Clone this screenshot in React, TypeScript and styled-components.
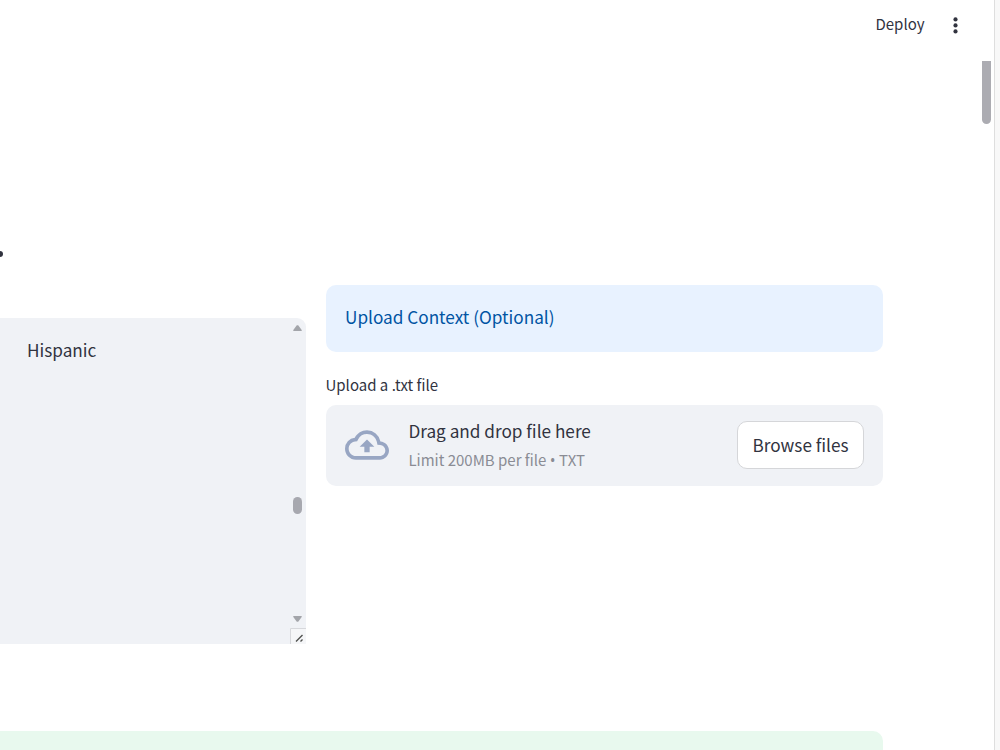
import React from "react";
import styled, { createGlobalStyle } from "styled-components";

const GlobalStyle = createGlobalStyle`
  * { box-sizing: border-box; }
  html, body { margin: 0; height: 750px; overflow: hidden; background: #ffffff; }
  body {
    font-family: "Noto Sans CJK SC", "Source Sans Pro", sans-serif;
    color: #31333f;
  }
`;

const Shell = styled.div`
  display: flex;
  width: 1000px;
  height: 750px;
  overflow: hidden;
`;

const Main = styled.div`
  display: flex;
  flex-direction: column;
  width: 994px;
`;

const WindowEdge = styled.div`
  width: 6px;
  border-left: 1px solid #dedede;
  background: #f8f8f8;
`;

const Header = styled.header`
  display: flex;
  flex: none;
  justify-content: flex-end;
  align-items: center;
  height: 61px;
  padding: 0 34px 13px 0;
  gap: 26.5px;
`;

const Text = styled.span<{ $size: number; $line: number; $color?: string }>`
  display: block;
  font-size: ${(p) => p.$size}px;
  line-height: ${(p) => p.$line}px;
  color: ${(p) => p.$color ?? "#31333f"};
  white-space: nowrap;
`;

const Bullet = styled.span`
  font-family: "Open Sans", "Noto Sans", sans-serif;
  font-size: 15.5px;
  line-height: 1;
`;

const MenuDots = styled.svg`
  display: block;
  width: 9px;
  height: 20px;
  margin-top: 1px;
  fill: #31333f;
`;

const Body = styled.div`
  display: flex;
  flex: 1;
  min-height: 0;
`;

const Content = styled.main`
  display: flex;
  flex-direction: column;
  flex: none;
  width: 883px;
`;

const Track = styled.div`
  flex: 1;
  display: flex;
  justify-content: flex-end;
  padding-right: 3px;
`;

const PageThumb = styled.div`
  width: 9px;
  height: 63px;
  background: #acacb2;
  border-radius: 0 0 5px 5px;
`;

const Title = styled.div`
  height: 224px;
  flex: none;
  display: flex;
  align-items: flex-end;
  padding-bottom: 28px;
`;

const Period = styled.span`
  width: 3px;
  height: 6px;
  border-radius: 0 3px 3px 0;
  background: #31333f;
`;

const Columns = styled.div`
  display: grid;
  flex: none;
  grid-template-columns: 306px 557px;
  column-gap: 20px;
  height: 359px;
`;

const TextArea = styled.div`
  display: flex;
  justify-content: space-between;
  height: 326px;
  margin-top: 33px;
  background: #f0f2f6;
  border-radius: 0 9px 0 0;
  padding: 18px 0 0 27px;
`;

const ScrollBar = styled.div`
  display: flex;
  flex-direction: column;
  align-items: center;
  width: 17px;
  height: 326px;
  margin-top: -18px;
  padding-top: 7px;
`;

const Arrow = styled.svg`
  display: block;
  flex: none;
  width: 9px;
  height: 6px;
  fill: #a3a5aa;
`;

const Thumb = styled.div`
  flex: none;
  width: 9px;
  height: 17px;
  margin: 166px 0 102px;
  border-radius: 5px;
  background: #a7a8af;
`;

const Grip = styled.svg`
  display: block;
  width: 16px;
  height: 16px;
  margin-top: auto;
`;

const Side = styled.section`
  display: flex;
  flex-direction: column;
`;

const Info = styled.div`
  height: 67px;
  padding: 18px 19px;
  border-radius: 10px;
  background: #e8f2ff;
`;

const Label = styled.div`
  height: 23px;
  margin: 21px 0 9px -0.5px;
`;

const Dropzone = styled.div`
  display: flex;
  align-items: center;
  height: 81px;
  padding: 0 19px 1px;
  border-radius: 10px;
  background: #f0f2f6;
`;

const CloudIcon = styled.svg`
  flex: none;
  width: 44px;
  height: 44px;
  margin-right: 19.4px;
  fill: #98a6c3;
`;

const Instructions = styled.div`
  flex: 1;
  padding-bottom: 1px;
`;

const BrowseButton = styled.button`
  display: flex;
  justify-content: center;
  align-items: center;
  width: 127px;
  height: 48px;
  padding: 0 0 1px;
  border: 1px solid #d5d6d9;
  border-radius: 10px;
  background: #ffffff;
  font-family: inherit;
`;

const Success = styled.div`
  flex: none;
  height: 40px;
  margin-top: 87px;
  border-radius: 0 10px 0 0;
  background: #e8f9ee;
`;

export default function App() {
  return (
    <>
      <GlobalStyle />
      <Shell>
        <Main>
          <Header>
            <Text $size={15} $line={24}>Deploy</Text>
            <MenuDots viewBox="0 0 9 20">
              <circle cx="4.5" cy="4.4" r="2.1" />
              <circle cx="4.5" cy="10.4" r="2.1" />
              <circle cx="4.5" cy="16.4" r="2.1" />
            </MenuDots>
          </Header>
          <Body>
            <Content>
              <Title><Period /></Title>
              <Columns>
                <TextArea>
                  <Text $size={17.2} $line={28}>Hispanic</Text>
                  <ScrollBar>
                    <Arrow viewBox="0 0 9 6"><path d="M3.8 0.3h1.4L8.7 5v1H.3V5z" /></Arrow>
                    <Thumb />
                    <Arrow viewBox="0 0 9 6"><path d="M.3 0h8.4v1L5.2 5.8H3.8L.3 1z" /></Arrow>
                    <Grip viewBox="0 0 16 16">
                      <rect width="16" height="16" fill="#f5f6f8" />
                      <path d="M.5 16V.5H16" fill="none" stroke="#d7d8dc" />
                      <path d="M6 13.5l6.5-6.5M10.5 13.5l2-2" fill="none" stroke="#50514f" strokeWidth="1.4" />
                    </Grip>
                  </ScrollBar>
                </TextArea>
                <Side>
                  <Info>
                    <Text $size={17.2} $line={28} $color="#0054a3">Upload Context (Optional)</Text>
                  </Info>
                  <Label><Text $size={15} $line={23}>Upload a .txt file</Text></Label>
                  <Dropzone>
                    <CloudIcon viewBox="0 0 24 24">
                      <path d="M19.35 10.04A7.49 7.49 0 0 0 12 4C9.11 4 6.6 5.64 5.35 8.04A5.994 5.994 0 0 0 0 14c0 3.31 2.69 6 6 6h13c2.76 0 5-2.24 5-5 0-2.64-2.05-4.78-4.65-4.96zM19 18H6c-2.21 0-4-1.79-4-4 0-2.05 1.53-3.76 3.56-3.97l1.07-.11.5-.95A5.469 5.469 0 0 1 12 6c2.62 0 4.88 1.86 5.39 4.43l.3 1.5 1.53.11A2.98 2.98 0 0 1 22 15c0 1.65-1.35 3-3 3zM8 13h2.55v3h2.9v-3H16l-4-4z" />
                    </CloudIcon>
                    <Instructions>
                      <Text $size={17.2} $line={30}>Drag and drop file here</Text>
                      <Text $size={15} $line={27} $color="#8a8c94">Limit 200MB per file <Bullet>•</Bullet> TXT</Text>
                    </Instructions>
                    <BrowseButton><Text $size={17.2} $line={28}>Browse files</Text></BrowseButton>
                  </Dropzone>
                </Side>
              </Columns>
              <Success />
            </Content>
            <Track><PageThumb /></Track>
          </Body>
        </Main>
        <WindowEdge />
      </Shell>
    </>
  );
}
